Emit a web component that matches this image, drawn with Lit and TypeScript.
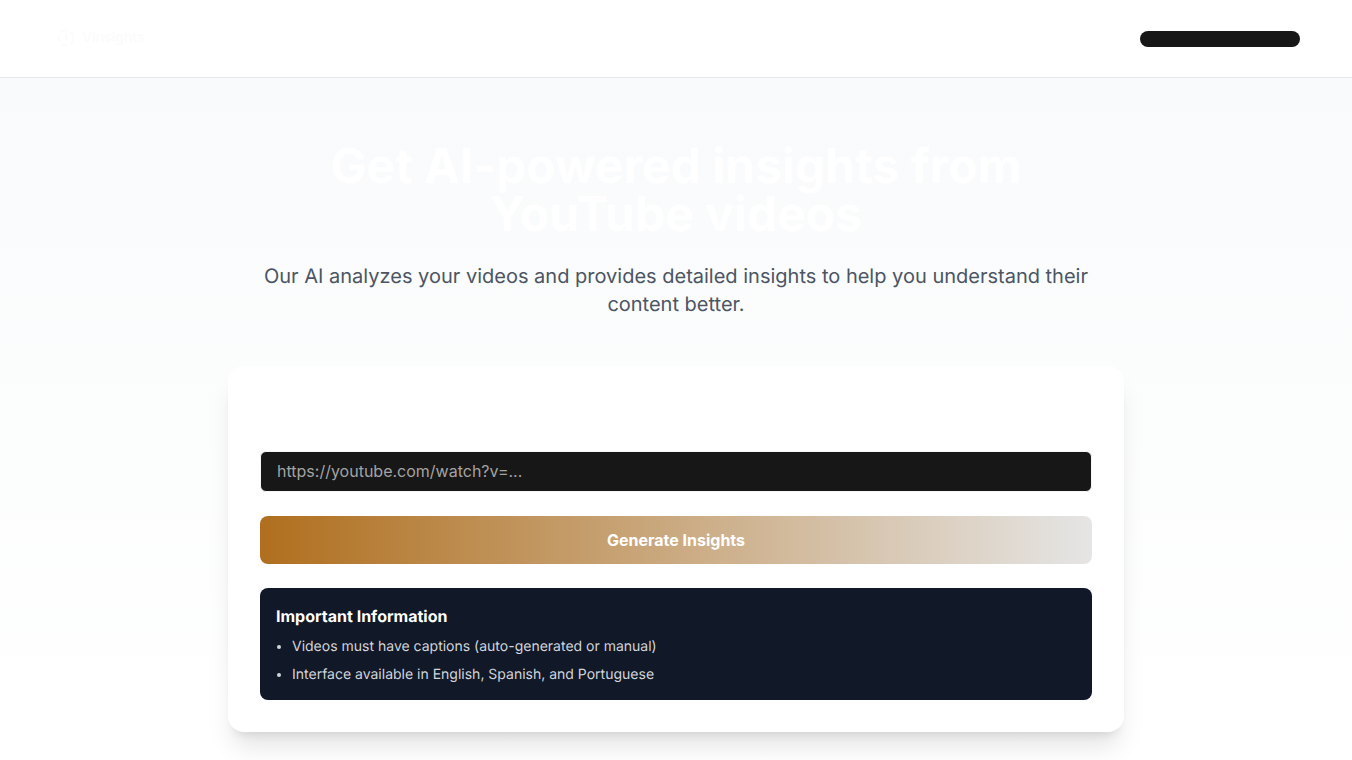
import { LitElement, css, html } from "lit";
import { customElement } from "lit/decorators.js";

@customElement("app-root")
export class AppRoot extends LitElement {
  static styles = css`
    :host {
      display: block;
      height: 760px;
      overflow: hidden;
      font-family: Inter, "Liberation Sans", sans-serif;
      text-rendering: geometricPrecision;
      background: #fff;
    }
    .top {
      height: 77px;
      border-bottom: 1px solid #e5e7eb;
      background: #fff;
      display: flex;
      align-items: center;
      justify-content: space-between;
      padding: 0 52px 0 56px;
    }
    .brand {
      display: flex;
      align-items: center;
      gap: 6px;
      color: #fbfbfb;
      font-size: 14px;
      line-height: 20px;
      font-weight: 500;
      margin-top: -1px;
    }
    .brand svg {
      width: 20px;
      height: 20px;
      display: block;
    }
    .pill {
      width: 160px;
      height: 16px;
      border-radius: 8px;
      background: #171717;
    }
    main {
      height: 682px;
      background: linear-gradient(180deg, #f9fafb 0%, #ffffff 100%);
      display: flex;
      flex-direction: column;
      align-items: center;
      padding-top: 64px;
      box-sizing: border-box;
    }
    h1 {
      margin: 0;
      width: 768px;
      text-align: center;
      color: #fff;
      font-size: 48px;
      line-height: 48px;
      font-weight: 700;
    }
    .lead {
      margin: 24px 0 0;
      width: 896px;
      text-align: center;
      color: #4b5563;
      font-size: 20px;
      line-height: 28px;
    }
    .card {
      margin-top: 48px;
      width: 896px;
      box-sizing: border-box;
      padding: 85px 32px 32px;
      background: #fff;
      border-radius: 16px;
      box-shadow: 0 20px 25px -5px rgba(0, 0, 0, 0.1), 0 8px 10px -6px rgba(0, 0, 0, 0.1);
      display: flex;
      flex-direction: column;
      gap: 24px;
    }
    .url {
      height: 41px;
      box-sizing: border-box;
      border: 1px solid #f5f5f5;
      border-radius: 6px;
      background: #171717;
      color: #a3a3a3;
      font: inherit;
      font-size: 16px;
      padding: 0 16px 1px;
      outline: none;
      width: 100%;
    }
    .url::placeholder {
      color: #a3a3a3;
      opacity: 1;
    }
    .go {
      height: 48px;
      border: 0;
      border-radius: 8px;
      background: linear-gradient(90deg, #b06f1e 0%, #e5e5e5 100%);
      color: #fff;
      font: inherit;
      font-size: 16px;
      font-weight: 700;
      padding: 0;
    }
    .info {
      background: #111827;
      border-radius: 8px;
      padding: 16px;
      height: 112px;
      box-sizing: border-box;
    }
    h2 {
      margin: 0 0 9px;
      color: #fff;
      font-size: 16px;
      line-height: 24px;
      font-weight: 700;
    }
    ul {
      margin: 0;
      padding: 0 0 0 16px;
      color: #d1d5db;
      font-size: 14px;
      line-height: 20px;
    }
    li + li {
      margin-top: 8px;
    }
  `;

  render() {
    return html`
      <header class="top">
        <div class="brand">
          <svg viewBox="0 0 24 24" fill="none" stroke="#fbfbfb" stroke-width="2">
            <circle cx="12" cy="12" r="9" stroke-dasharray="8 4"></circle>
            <path d="M12 7v6l3 2"></path>
          </svg>
          <span>VInsights</span>
        </div>
        <div class="pill"></div>
      </header>
      <main>
        <h1>Get AI-powered insights from YouTube videos</h1>
        <p class="lead">
          Our AI analyzes your videos and provides detailed insights to help you understand their
          content better.
        </p>
        <section class="card">
          <input class="url" placeholder="https://youtube.com/watch?v=..." />
          <button class="go">Generate Insights</button>
          <div class="info">
            <h2>Important Information</h2>
            <ul>
              <li>Videos must have captions (auto-generated or manual)</li>
              <li>Interface available in English, Spanish, and Portuguese</li>
            </ul>
          </div>
        </section>
      </main>
    `;
  }
}
